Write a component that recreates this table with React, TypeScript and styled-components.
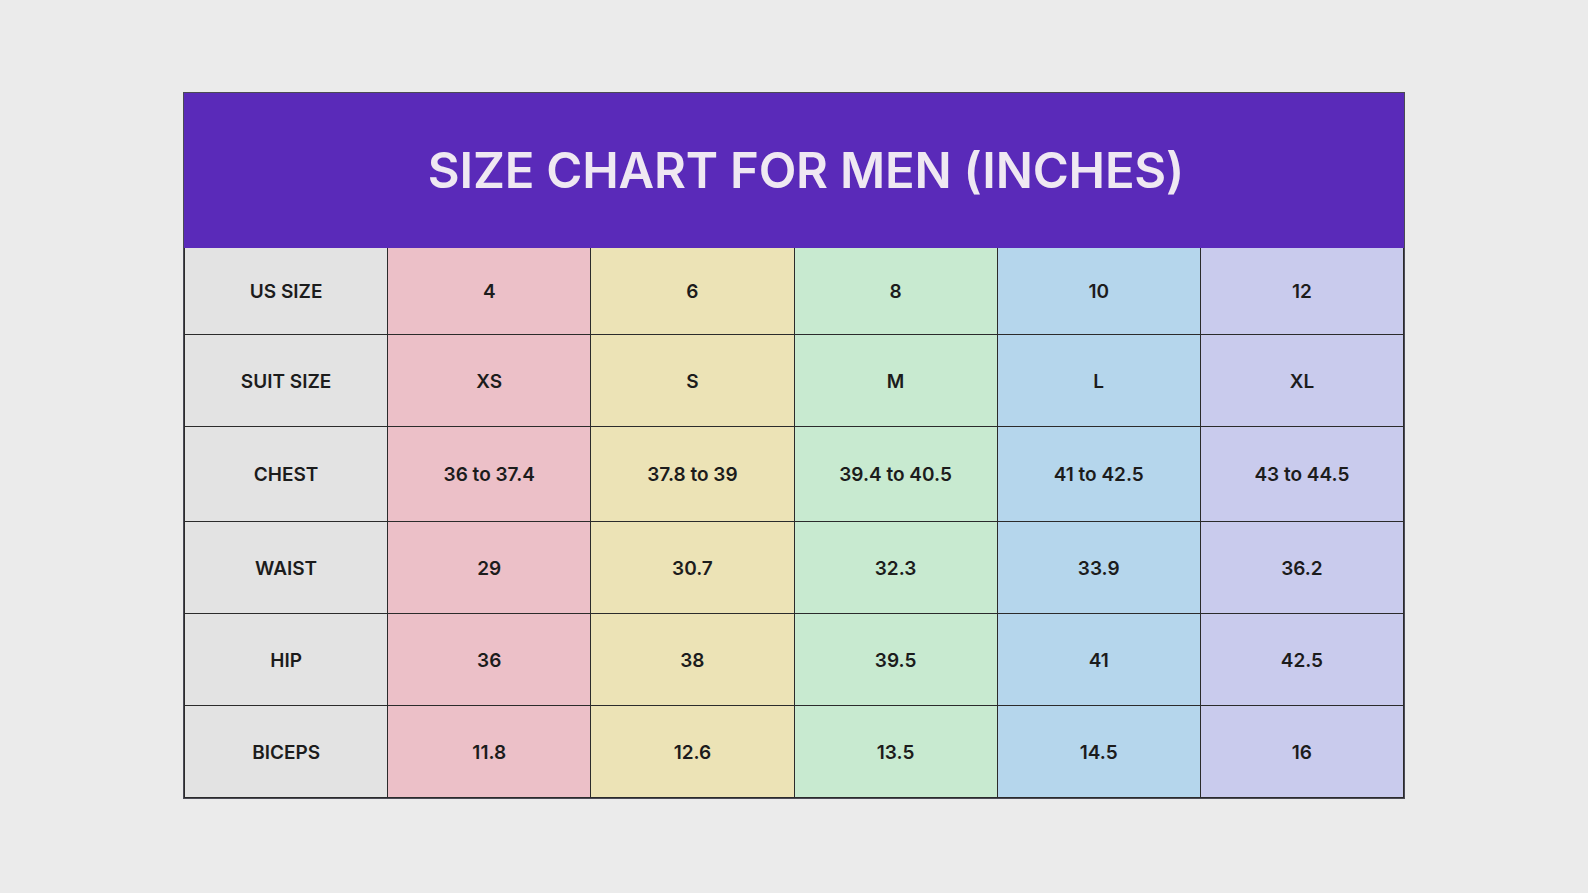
import React from "react";
import styled, { createGlobalStyle } from "styled-components";

const Global = createGlobalStyle`
  html, body { margin: 0; padding: 0; background: #ebebeb; }
  body { font-family: "Inter", "Liberation Sans", sans-serif; }
`;

const Page = styled.div`
  width: 1588px;
  height: 893px;
  display: flex;
  justify-content: center;
  align-items: flex-start;
  padding-top: 93px;
  box-sizing: border-box;
  background: #ebebeb;
`;

const Chart = styled.div`
  width: 1220px;
  display: flex;
  flex-direction: column;
  box-shadow: 0 0 0 1px #4a4a55;
`;

const Header = styled.div`
  height: 155px;
  background: #5a2ab9;
  display: flex;
  align-items: center;
  justify-content: center;
  padding-left: 24px;
`;

const Title = styled.h1`
  margin: 0;
  color: #efe8f2;
  font-family: "Inter", "Liberation Sans", sans-serif;
  font-weight: 600;
  font-size: 49px;
  letter-spacing: -0.2px;
  line-height: 1;
`;

const Grid = styled.div`
  display: grid;
  grid-template-columns: repeat(6, 1fr);
  border-left: 1.5px solid #2b2b2b;
`;

const Cell = styled.div<{ $bg: string; $h: number }>`
  height: ${(p) => p.$h}px;
  background: ${(p) => p.$bg};
  border-right: 1.5px solid #2b2b2b;
  border-bottom: 1.5px solid #2b2b2b;
  box-sizing: border-box;
  display: flex;
  align-items: center;
  justify-content: center;
  font-family: "Inter", "Liberation Sans", sans-serif;
  font-weight: 600;
  font-size: 19px;
  color: #1c1c1c;
  padding-top: 1px;
`;

const colors = ["#e3e3e3", "#ecc0c8", "#ece3b6", "#c8ead0", "#b5d6ec", "#c9cbed"];

const rows: { h: number; cells: string[] }[] = [
  { h: 87, cells: ["US SIZE", "4", "6", "8", "10", "12"] },
  { h: 92, cells: ["SUIT SIZE", "XS", "S", "M", "L", "XL"] },
  { h: 95, cells: ["CHEST", "36 to 37.4", "37.8 to 39", "39.4 to 40.5", "41 to 42.5", "43 to 44.5"] },
  { h: 92, cells: ["WAIST", "29", "30.7", "32.3", "33.9", "36.2"] },
  { h: 92, cells: ["HIP", "36", "38", "39.5", "41", "42.5"] },
  { h: 92, cells: ["BICEPS", "11.8", "12.6", "13.5", "14.5", "16"] },
];

export default function App() {
  return (
    <>
      <Global />
      <Page>
        <Chart>
          <Header>
            <Title>SIZE CHART FOR MEN (INCHES)</Title>
          </Header>
          <Grid>
            {rows.map((r, ri) =>
              r.cells.map((c, ci) => (
                <Cell key={`${ri}-${ci}`} $bg={colors[ci]} $h={r.h}>
                  {c}
                </Cell>
              ))
            )}
          </Grid>
        </Chart>
      </Page>
    </>
  );
}
